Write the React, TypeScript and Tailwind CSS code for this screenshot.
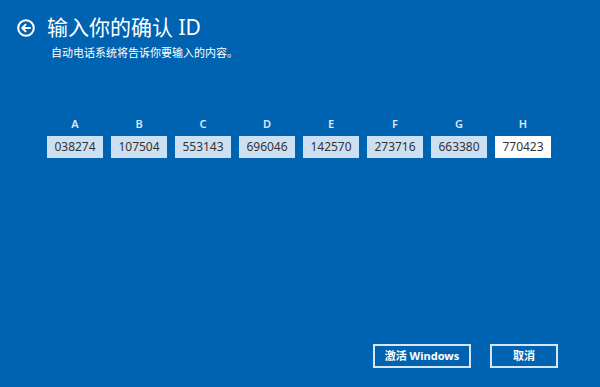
const codes = [
  { label: "A", value: "038274" },
  { label: "B", value: "107504" },
  { label: "C", value: "553143" },
  { label: "D", value: "696046" },
  { label: "E", value: "142570" },
  { label: "F", value: "273716" },
  { label: "G", value: "663380" },
  { label: "H", value: "770423", active: true },
];

const font = "font-['Noto_Sans','Noto_Sans_CJK_SC',sans-serif]";

function BackIcon() {
  return (
    <svg width="18" height="18" viewBox="0 0 18 18" fill="none" stroke="white" strokeWidth="2">
      <circle cx="9" cy="9" r="7.8" />
      <path d="M13 9H5.5M8.6 5.6 5.2 9l3.4 3.4" strokeLinecap="round" strokeLinejoin="round" />
    </svg>
  );
}

export default function App() {
  return (
    <div className={`flex h-[387px] w-[600px] flex-col bg-[#0063b1] text-white ${font}`}>
      <div className="flex items-center gap-[12px] pl-[17px] pt-[17px]">
        <BackIcon />
        <h1 className="text-[21px] leading-[21px] font-normal">输入你的确认 ID</h1>
      </div>
      <p className="mt-[8px] pl-[51px] text-[11px] leading-[14px]">自动电话系统将告诉你要输入的内容。</p>

      <div className="mt-[57px] grid grid-cols-[repeat(8,56px)] gap-x-[8px] pl-[47px]">
        {codes.map((c) => (
          <div key={c.label} className="flex flex-col items-center">
            <span className="text-[11px] leading-[14px] font-semibold text-[#dbe8f5]">{c.label}</span>
            <div
              className={`mt-[5px] flex h-[22px] w-[56px] items-center justify-center text-[12px] text-[#333333] ${
                c.active ? "bg-white" : "bg-[#cde0f1]"
              }`}
            >
              {c.value}
            </div>
          </div>
        ))}
      </div>

      <div className="mt-auto flex justify-end gap-[19px] pb-[19px] pr-[42px]">
        <button className="flex h-[24px] w-[98px] items-center justify-center border-2 border-[#d6e6f5] text-[11px] font-bold">
          激活 Windows
        </button>
        <button className="flex h-[24px] w-[68px] items-center justify-center border-2 border-[#d6e6f5] text-[11px] font-bold">
          取消
        </button>
      </div>
    </div>
  );
}
